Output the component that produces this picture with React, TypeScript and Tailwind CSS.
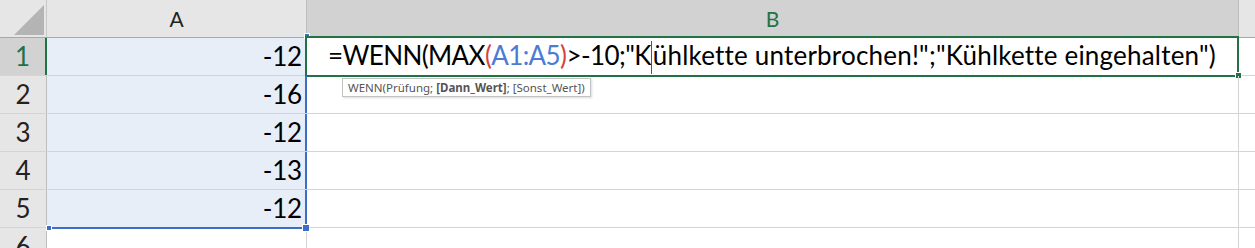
const cellFont = { fontFamily: 'Lato, "Noto Sans", sans-serif' };

const values = [-12, -16, -12, -13, -12];

function Corner() {
  return (
    <div className="relative h-full w-[47px] shrink-0 border-r border-[#c8c8c8] bg-[#e6e6e6]">
      <svg className="absolute left-[14px] top-[5px]" width="30" height="30" viewBox="0 0 30 30">
        <polygon points="30,0 30,30 0,30" fill="#b4b4b4" />
      </svg>
    </div>
  );
}

function RowHead({ n, active }: { n: number; active?: boolean }) {
  return (
    <div
      className={
        active
          ? "flex h-full w-[47px] shrink-0 items-center justify-center border-r-2 border-[#217346] bg-[#d2d2d2] text-[26px] text-[#217346]"
          : "flex h-full w-[47px] shrink-0 items-center justify-center border-r border-[#bdbdbd] bg-[#e6e6e6] text-[26px] text-[#222]"
      }
    >
      {n}
    </div>
  );
}

function Formula() {
  return (
    <span className="whitespace-nowrap">
      <span className="tracking-[-0.6px]">
        =WENN(MAX<span className="text-[#d9413a]">(</span>
        <span className="text-[#4a7cd4]">A1:A5</span>
        <span className="text-[#d9413a]">)</span>&gt;-10;"K
      </span>
      <span className="mx-[0.5px] inline-block h-[33px] w-px bg-[#555] align-middle" />
      <span className="tracking-[0.2px]">ühlkette unterbrochen!";"Kühlkette eingehalten")</span>
    </span>
  );
}

export default function App() {
  return (
    <div className="relative h-[248px] w-[1255px] overflow-hidden bg-white text-black" style={cellFont}>
      {/* column headers */}
      <div className="flex h-[38px] border-b border-[#a8a8a8]">
        <Corner />
        <div className="flex w-[260px] shrink-0 items-center justify-center border-r border-[#bdbdbd] bg-[#e6e6e6] text-[21px] text-[#222]">
          A
        </div>
        <div className="flex w-[932px] shrink-0 items-center justify-center border-r border-[#bdbdbd] bg-[#d2d2d2] text-[21px] text-[#217346]">
          B
        </div>
        <div className="flex-1 bg-[#e6e6e6]" />
      </div>

      {/* rows */}
      {[1, 2, 3, 4, 5, 6].map((n) => {
        const v = values[n - 1];
        return (
          <div key={n} className="flex h-[38px] border-b border-[#d4d4d4]">
            <RowHead n={n} active={n === 1} />
            <div
              className={
                v !== undefined
                  ? "relative flex w-[260px] shrink-0 items-center justify-end border-r-2 border-[#3b6fc6] bg-[#e8eef8] pr-[3px] text-[26px]"
                  : "w-[260px] shrink-0 border-r border-[#d4d4d4]"
              }
            >
              {v !== undefined && <span className="tracking-[-0.2px]">{v}</span>}
              {n === 1 && (
                <span className="absolute -right-[5px] -top-[5px] h-[6px] w-[6px] border border-white bg-[#3b6fc6]" />
              )}
              {n === 5 && (
                <>
                  <span className="absolute -bottom-[2px] left-0 right-0 h-[2px] bg-[#3b6fc6]" />
                  <span className="absolute -bottom-[5px] -right-[5px] h-[8px] w-[8px] border border-white bg-[#3b6fc6]" />
                  <span className="absolute -bottom-[4px] -left-[1px] h-[6px] w-[6px] border border-white bg-[#3b6fc6]" />
                </>
              )}
            </div>
            <div className="relative flex w-[932px] shrink-0 items-center border-r border-[#d4d4d4]">
              {n === 1 && (
                <>
                  <div className="absolute -left-[2px] -top-[2px] bottom-[-2px] right-[-1px] border-2 border-[#217346]" />
                  <div className="absolute -bottom-[4px] -right-[4px] h-[7px] w-[7px] border border-white bg-[#217346]" />
                  <div className="pb-[3px] pl-[21px] text-[26px]">
                    <Formula />
                  </div>
                </>
              )}
            </div>
            <div className="flex-1" />
          </div>
        );
      })}

      {/* function tooltip */}
      <div
        className="absolute left-[342px] top-[78px] flex h-[19px] items-center whitespace-pre border border-[#c3c3c3] bg-white px-[5px] text-[11.5px] text-[#555] shadow-[1px_1px_2px_rgba(0,0,0,0.15)]"
        style={{ fontFamily: '"Noto Sans", "Open Sans", sans-serif' }}
      >
        WENN(Prüfung; <span className="font-bold">[Dann_Wert]</span>; [Sonst_Wert])
      </div>
    </div>
  );
}
